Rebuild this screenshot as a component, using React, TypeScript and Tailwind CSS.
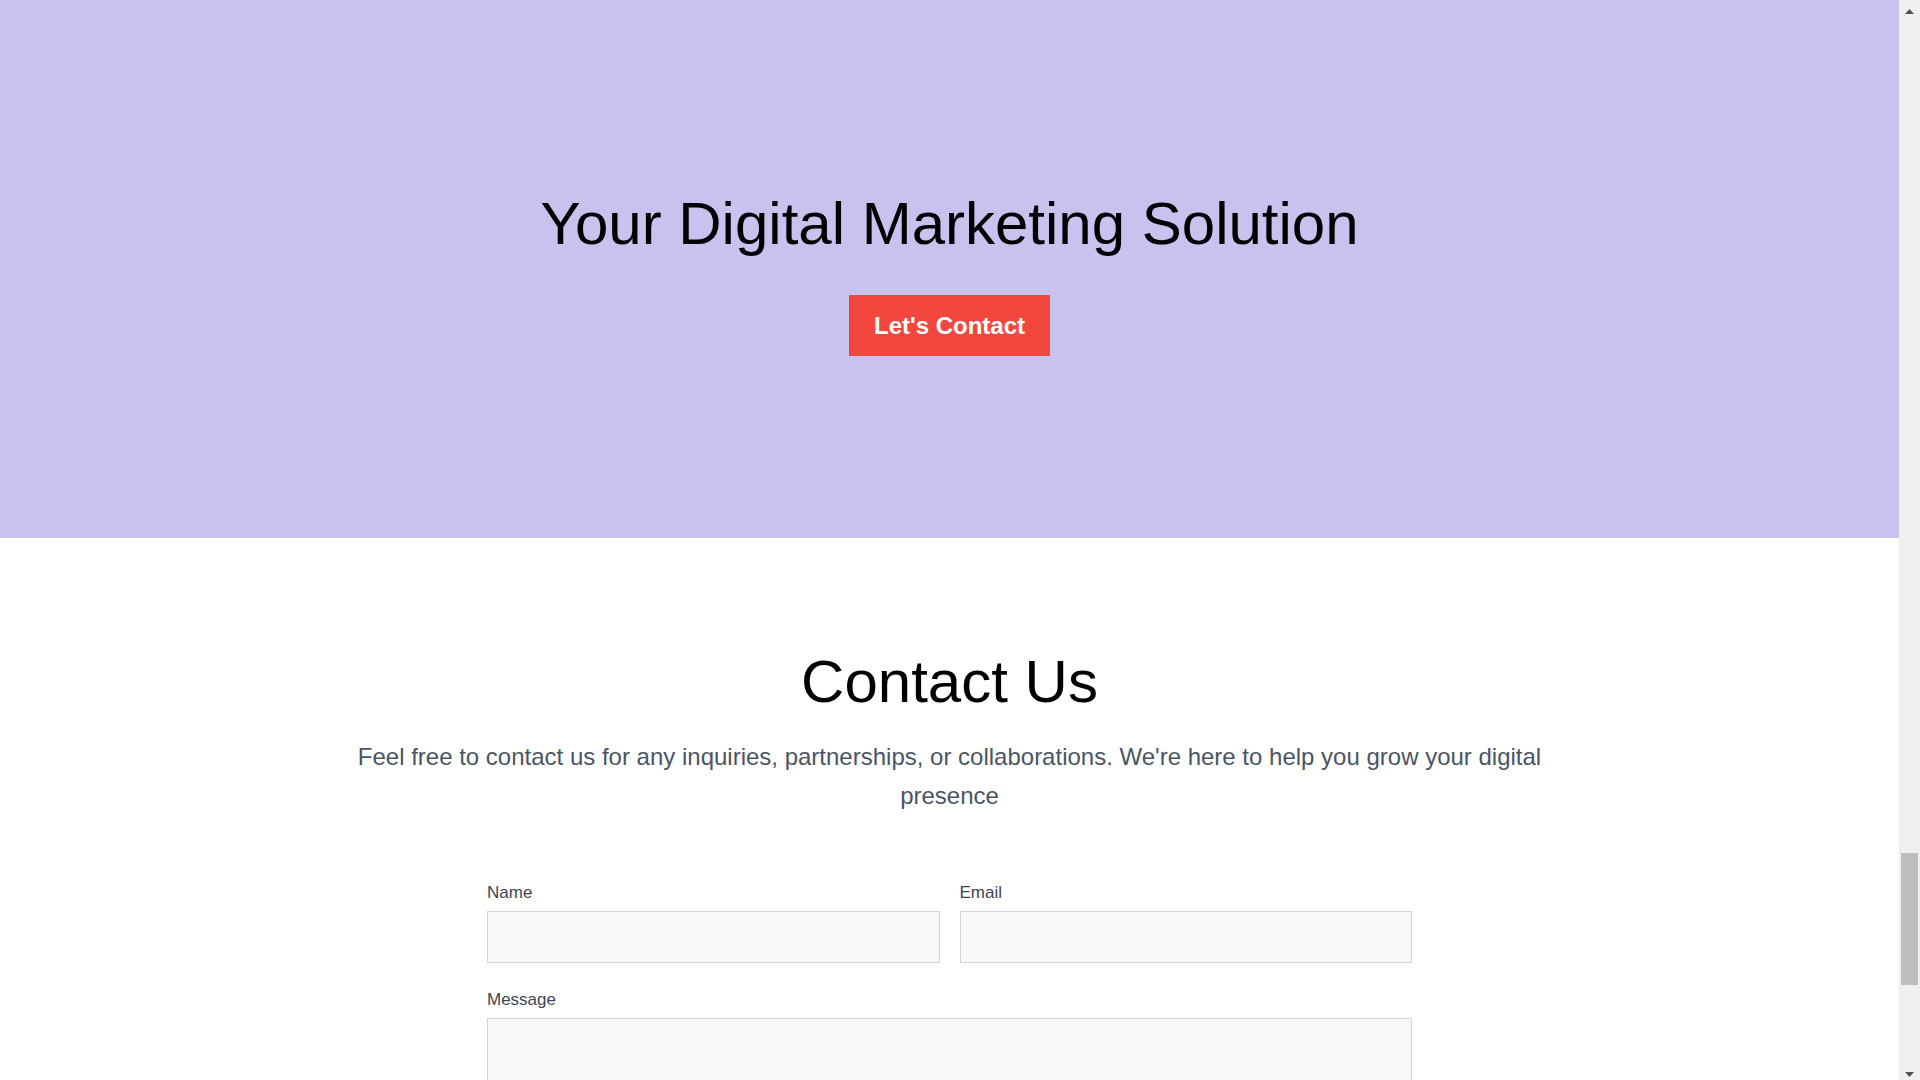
export default function App() {
  return (
    <div className="flex h-screen overflow-hidden bg-white font-['Liberation_Sans',Arial,sans-serif]">
      <main className="min-w-0 flex-1 overflow-hidden">
        {/* Hero */}
        <section className="flex h-[538px] flex-col items-center bg-[#c8c2ee] pt-[194px]">
          <h1 className="text-6xl leading-none text-black">Your Digital Marketing Solution</h1>
          <button
            type="button"
            className="mt-[41px] flex h-[61px] w-[201px] items-center justify-center bg-[#f2473f] text-2xl font-bold text-white"
          >
            Let's Contact
          </button>
        </section>

        {/* Contact */}
        <section className="flex flex-col items-center px-4 pt-[114px]">
          <h2 className="text-6xl leading-none text-black">Contact Us</h2>
          <p className="mt-[25px] max-w-7xl text-center text-2xl leading-[39px] text-[#4b5563]">
            Feel free to contact us for any inquiries, partnerships, or collaborations. We're here to help you grow your digital presence
          </p>

          <form className="mt-[66px] w-[925px]">
            <div className="grid grid-cols-2 gap-5">
              <div>
                <label className="mb-1.5 block text-[17px] leading-6 text-[#3f4654]">Name</label>
                <input
                  type="text"
                  className="block h-[52px] w-full border border-[#d4d4d8] bg-[#f8f8f8] px-3 outline-none"
                />
              </div>
              <div>
                <label className="mb-1.5 block text-[17px] leading-6 text-[#3f4654]">Email</label>
                <input
                  type="email"
                  className="block h-[52px] w-full border border-[#d4d4d8] bg-[#f8f8f8] px-3 outline-none"
                />
              </div>
            </div>
            <div className="mt-[25px]">
              <label className="mb-1.5 block text-[17px] leading-6 text-[#3f4654]">Message</label>
              <textarea
                rows={6}
                className="block h-[160px] w-full resize-none border border-[#d4d4d8] bg-[#f8f8f8] px-3 py-2 outline-none"
              />
            </div>
          </form>
        </section>
      </main>

      {/* Scrollbar */}
      <aside className="flex w-[21px] shrink-0 flex-col bg-[#f0f0f0]">
        <div className="flex h-[17px] items-end justify-center pb-[3px]">
          <svg width="9" height="5" viewBox="0 0 9 5">
            <polygon points="4.5,0 9,5 0,5" fill="#505050" />
          </svg>
        </div>
        <div className="flex flex-1 flex-col px-[2px]">
          <div className="mt-[836px] h-[132px] bg-[#bebebe]" />
        </div>
        <div className="flex h-[17px] items-start justify-center pt-[9px]">
          <svg width="9" height="5" viewBox="0 0 9 5">
            <polygon points="0,0 9,0 4.5,5" fill="#505050" />
          </svg>
        </div>
      </aside>
    </div>
  )
}
